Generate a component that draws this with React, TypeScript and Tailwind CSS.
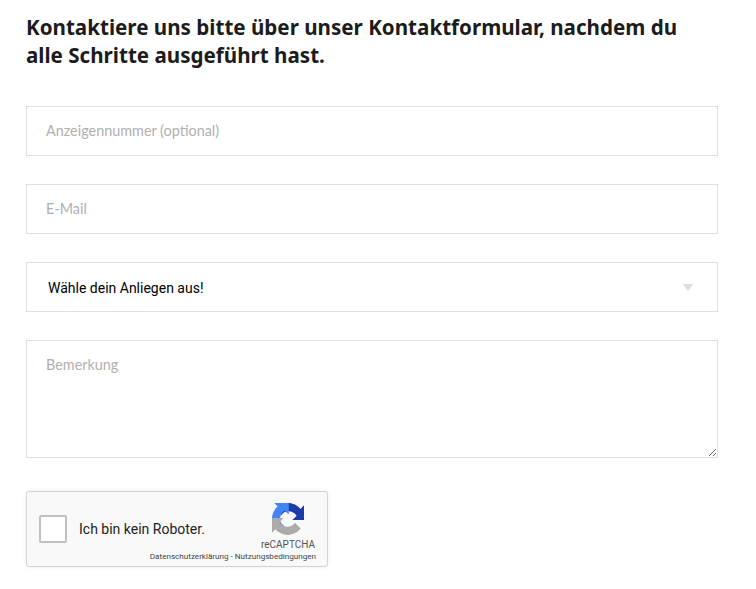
// App.tsx
const FIELD =
  "block w-full h-[50px] border border-[#e1e1e1] bg-white pl-[19px] pr-5 pb-[2px] text-[14.4px] text-black outline-none placeholder:text-[#b0b0b0] font-['Lato',sans-serif]"

function RecaptchaLogo() {
  return (
    <svg width="32" height="32" viewBox="0 0 64 64" aria-hidden>
      <path
        d="M64 31.955l-.033-1.37V4.687l-7.16 7.16C50.948 4.674 42.033.093 32.05.093c-10.4 0-19.622 4.96-25.458 12.64l11.736 11.86a15.55 15.55 0 0 1 4.754-5.334c2.05-1.6 4.952-2.906 9.968-2.906.606 0 1.074.07 1.42.2 6.217.49 11.604 3.92 14.773 8.9l-8.3 8.3 32.076.2"
        fill="#1c3aa9"
      />
      <path
        d="M31.72.002l-1.37.033H4.45l7.16 7.16C4.437 13.053-.144 21.968-.144 31.95c0 10.4 4.96 19.622 12.64 25.458l11.86-11.736a15.55 15.55 0 0 1-5.334-4.754c-1.6-2.05-2.906-4.952-2.906-9.968 0-.606.07-1.074.2-1.42.49-6.217 3.92-11.604 8.9-14.773l8.3 8.3.2-32.076"
        fill="#4285f4"
      />
      <path
        d="M.002 32l.033 1.37v25.9l7.16-7.16c5.857 7.173 14.772 11.754 24.754 11.754 10.4 0 19.622-4.96 25.458-12.64l-11.736-11.86a15.55 15.55 0 0 1-4.754 5.334c-2.05 1.6-4.952 2.906-9.968 2.906-.606 0-1.074-.07-1.42-.2-6.217-.49-11.604-3.92-14.773-8.9l8.3-8.3-32.076-.2"
        fill="#ababab"
      />
    </svg>
  )
}

export default function App() {
  return (
    <div className="min-h-[589px] bg-white pl-[26px] pr-[38px] pt-[13px] font-['Noto_Sans',sans-serif]">
      <h2 className="max-w-[670px] text-[20.6px] font-bold leading-[28px] text-[#1c1c1c]">
        Kontaktiere uns bitte über unser Kontaktformular, nachdem du alle Schritte ausgeführt hast.
      </h2>

      <form className="mt-[37px] flex flex-col gap-[28px]">
        <input className={FIELD} placeholder="Anzeigennummer (optional)" />
        <input className={FIELD} placeholder="E-Mail" />

        {/* Select with custom arrow */}
        <div className="relative">
          <div className="flex h-[50px] w-full items-center border border-[#e1e1e1] bg-white pl-[21px] pr-5 pt-[2px] font-['Roboto',sans-serif] text-[14px] text-black">
            Wähle dein Anliegen aus!
          </div>
          <span className="absolute right-[25px] top-[22px] h-0 w-0 border-x-[5px] border-t-[7px] border-x-transparent border-t-[#dcdcdc]" />
        </div>

        <textarea
          className="block h-[118px] w-full border border-[#e1e1e1] bg-white py-[13px] pl-[19px] pr-5 font-['Lato',sans-serif] text-[14.4px] text-black outline-none placeholder:text-[#b0b0b0]"
          placeholder="Bemerkung"
        />
      </form>

      {/* reCAPTCHA box */}
      <div className="mt-[33px] flex h-[76px] w-[302px] rounded-[3px] border border-[#d3d3d3] bg-[#f9f9f9] font-['Roboto',sans-serif] shadow-[0_0_4px_rgba(0,0,0,0.08)]">
        <div className="flex flex-1 items-center pl-[12px]">
          <span className="h-[28px] w-[28px] rounded-[2px] border-2 border-[#c1c1c1] bg-white" />
          <span className="ml-[12px] text-[14px] text-[#222]">Ich bin kein Roboter.</span>
        </div>
        <div className="flex w-[100px] flex-col items-end pr-[11px] pt-[11px]">
          <div className="mr-[12px]">
            <RecaptchaLogo />
          </div>
          <span className="mr-[1px] mt-[4px] text-[10px] leading-[12px] text-[#555]">reCAPTCHA</span>
          <span className="whitespace-nowrap text-[8.1px] leading-[10px] text-[#444]">
            Datenschutzerklärung - Nutzungsbedingungen
          </span>
        </div>
      </div>
    </div>
  )
}
